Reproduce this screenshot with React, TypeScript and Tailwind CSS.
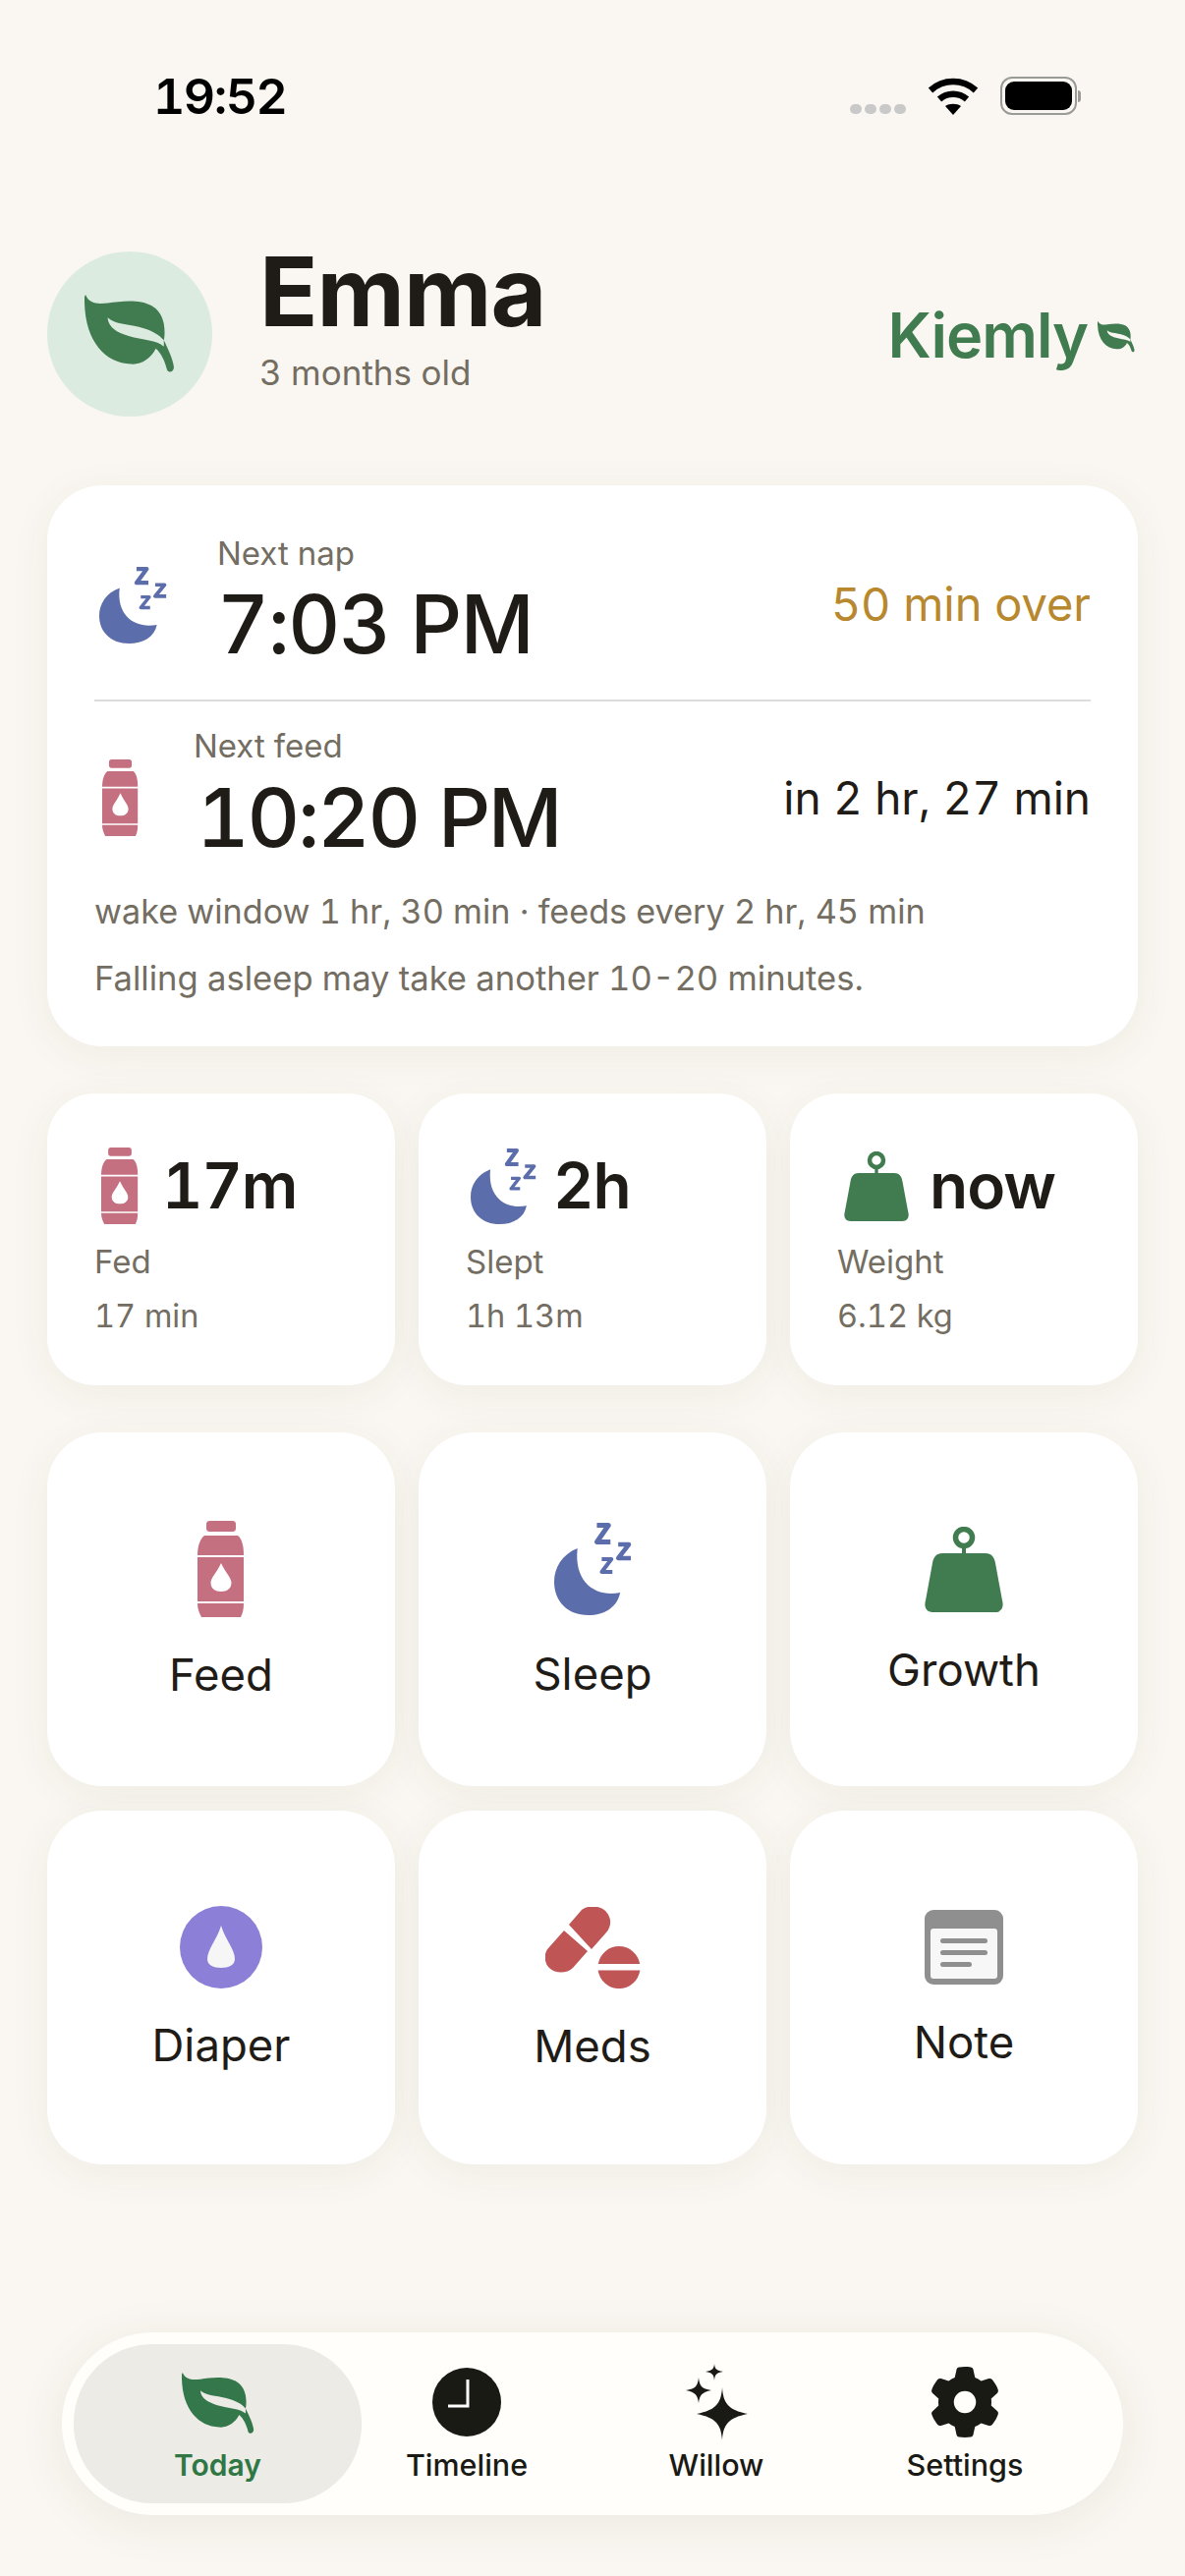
import { FaGear } from 'react-icons/fa6'

type IconProps = { w: number; h: number; className?: string }

function Leaf({ w, h, fill, vein, className }: IconProps & { fill: string; vein: string }) {
  return (
    <svg width={w} height={h} viewBox="0 0 90 76" preserveAspectRatio="none" className={className}>
      <path fill={fill} d="M1 0 C5 9 13 9 23 8 C44 5 74 2 79 28 C80 34 80 40 79 44 C83 52 88 62 89 70 C89 75 83 76 82 72 C80 64 76 56 71 52 C66 62 56 68 46 67 C20 66 -1 44 0 2 Z" />
      <path fill={vein} d="M23 22 C32 29 42 28 54 31 C66 34 74 38 79 44 L79 50 C72 44 58 44 44 40 C32 36 24 32 23 22 Z" />
    </svg>
  )
}

function Bottle({ w, h, className }: IconProps) {
  return (
    <svg width={w} height={h} viewBox="0 0 48 98" preserveAspectRatio="none" className={className}>
      <g fill="#c47080">
        <rect x="9" y="0" width="30" height="11" rx="3.5" />
        <path d="M7 15 H41 C45 18 47 25 47 35 H0 C0 25 3 18 7 15 Z" />
        <path fillRule="evenodd" d="M0 37 H47 V82 H0 Z M24 43 C20 52 13.5 58 13.5 63 C13.5 69 18 72 24 72 C30 72 34.5 69 34.5 63 C34.5 58 28 52 24 43 Z" />
        <path d="M0 84 H47 C47 90 46 94 44 98 H4 C2 94 0 90 0 84 Z" />
      </g>
    </svg>
  )
}

function MoonZ({ w, h, className }: IconProps) {
  return (
    <svg width={w} height={h} viewBox="0 0 80 94" preserveAspectRatio="none" className={className}>
      <path fill="#5c6dab" d="M24 26 C8 32 0 46 0 60 C0 80 14 94 35 94 C52 94 65 86 68 71 C44 76 20 62 24 26 Z" />
      <g fill="none" stroke="#5c6dab" strokeLinejoin="round">
        <path strokeWidth="5" d="M44 2.5 H56 L44 19.5 H58" />
        <path strokeWidth="4.5" d="M66 22 H77 L66 36 H79" />
        <path strokeWidth="4" d="M49 37 H59 L49 50 H60" />
      </g>
    </svg>
  )
}

function Weight({ w, h, className }: IconProps) {
  return (
    <svg width={w} height={h} viewBox="0 0 80 87" preserveAspectRatio="none" className={className}>
      <path fill="#407c50" d="M18 27 H62 C68 27 71 31 72 37 L79 75 C81 82 78 87 72 87 H8 C2 87 -1 82 1 75 L8 37 C9 31 12 27 18 27 Z" />
      <circle cx="40" cy="11" r="8.5" fill="none" stroke="#407c50" strokeWidth="5.5" />
      <rect x="38" y="18" width="4" height="10" fill="#407c50" />
    </svg>
  )
}

function DiaperIcon({ className }: { className?: string }) {
  return (
    <svg width={84} height={84} viewBox="0 0 84 84" className={className}>
      <circle cx="42" cy="42" r="42" fill="#8b7fd8" />
      <path fill="#f6f6f6" d="M42 20 C38 34 28 44 28 54 C28 60 34 63 42 63 C50 63 56 60 56 54 C56 44 46 34 42 20 Z" />
    </svg>
  )
}

function MedsIcon({ className }: { className?: string }) {
  return (
    <svg width={97} height={83} viewBox="0 0 97 83" className={className}>
      <g fill="#bf5555">
        <path d="M24 18 L37 3 C43 -2 56 -2 62 5 C68 12 67 20 62 26 L47 43 Z" />
        <path d="M19 24 L43 45 L28 62 C22 68 10 68 4 62 C-2 56 -1 46 3 42 Z" />
        <path d="M53.8 58 A21.5 21.5 0 0 1 96.2 58 Z" />
        <path d="M53.7 64.5 A21.5 21.5 0 0 0 96.3 64.5 Z" />
      </g>
    </svg>
  )
}

function NoteIcon({ className }: { className?: string }) {
  return (
    <svg width={80} height={76} viewBox="0 0 80 76" className={className}>
      <rect width="80" height="76" rx="9" fill="#8f8f8f" />
      <rect x="6" y="19" width="68" height="51" rx="3" fill="#f7f7f7" />
      <rect x="16" y="29" width="48" height="5" rx="2.5" fill="#8f8f8f" />
      <rect x="16" y="41" width="48" height="5" rx="2.5" fill="#8f8f8f" />
      <rect x="16" y="53" width="32" height="5" rx="2.5" fill="#8f8f8f" />
    </svg>
  )
}

function ClockIcon() {
  return (
    <svg width={70} height={70} viewBox="0 0 70 70">
      <circle cx="35" cy="35" r="35" fill="#1a1a15" />
      <path d="M36 12 V39 H16" fill="none" stroke="#fff" strokeWidth="3" />
    </svg>
  )
}

function SparkIcon() {
  return (
    <svg width={64} height={78} viewBox="0 0 64 78" fill="#1a1a15">
      <path d="M38 24 C39 40 44 47 64 51 C44 55 39 62 38 78 C37 62 32 55 12 51 C32 47 37 40 38 24 Z" />
      <path d="M14 14 C15 23 17 25 27 27 C17 29 15 32 14 40 C13 32 11 29 1 27 C11 25 13 23 14 14 Z" />
      <path d="M30 0 C30.5 5 32 7 39 8 C32 9 30.5 11 30 17 C29.5 11 28 9 21 8 C28 7 29.5 5 30 0 Z" />
    </svg>
  )
}

function StatusBar() {
  return (
    <div className="flex items-start justify-between pl-[156px] pr-[106px] pt-[70px] h-[136px]">
      <span className="text-[50px] leading-[56px] font-semibold text-black tracking-[-1.5px]">19:52</span>
      <div className="flex items-end gap-[22px] pt-[8px]">
        <div className="flex gap-[3px] mb-[1px]">
          <i className="w-[12px] h-[10px] rounded-full bg-[#c9c9c9]" />
          <i className="w-[12px] h-[10px] rounded-full bg-[#c9c9c9]" />
          <i className="w-[12px] h-[10px] rounded-full bg-[#c9c9c9]" />
          <i className="w-[12px] h-[10px] rounded-full bg-[#c9c9c9]" />
        </div>
        <svg width={52} height={38} viewBox="0 0 52 38" fill="none" stroke="#000" strokeWidth="6.5">
          <path d="M3 13 C16 1 36 1 49 13" />
          <path d="M12 22 C20 15 32 15 40 22" />
          <path fill="#000" stroke="none" d="M18 29 C22 26 30 26 34 29 L26 38 Z" />
        </svg>
        <div className="flex items-center">
          <div className="w-[78px] h-[39px] rounded-[12px] border-2 border-[#9a9a96] p-[3px]">
            <div className="w-full h-full rounded-[9px] bg-black" />
          </div>
          <div className="w-[3px] h-[12px] rounded-r-full bg-[#9a9a96] ml-[1px]" />
        </div>
      </div>
    </div>
  )
}

function Header() {
  return (
    <div className="flex items-center mt-[120px] pl-[48px] pr-[51px]">
      <div className="w-[168px] h-[168px] rounded-full bg-[#dcebe0] flex items-center justify-center">
        <Leaf w={92} h={80} fill="#407c50" vein="#dcebe0" />
      </div>
      <div className="ml-[48px] -mt-[36px]">
        <h1 className="text-[98px] leading-[104px] font-bold text-[#1f1c17] tracking-[-1px]">Emma</h1>
        <p className="text-[35px] leading-[40px] text-[#736d62] mt-[10px]">3 months old</p>
      </div>
      <div className="ml-auto flex items-center gap-[10px] mt-[2px]">
        <span className="text-[63px] leading-[70px] font-semibold text-[#407c50] tracking-[-1px]">Kiemly</span>
        <Leaf w={38} h={32} fill="#407c50" vein="#faf7f2" className="mt-[4px]" />
      </div>
    </div>
  )
}

function NextRow({ icon, label, time, timeClass, right, rightClass, labelMl }: { icon: React.ReactNode; label: string; time: string; timeClass: string; right: string; rightClass: string; labelMl: string }) {
  return (
    <div className="flex items-center">
      {icon}
      <div className={labelMl}>
        <p className="text-[33px] leading-[40px] text-[#736d62]">{label}</p>
        <p className={`leading-[96px] font-medium text-[#1f1c17] mt-[5px] ${timeClass}`}>{time}</p>
      </div>
      <span className={rightClass}>{right}</span>
    </div>
  )
}

function NextCard() {
  return (
    <section className="mx-[48px] mt-[70px] h-[571px] rounded-[56px] bg-white shadow-[0_8px_44px_rgba(70,60,30,0.06)] px-[48px] pt-[49px]">
      <NextRow
        icon={<MoonZ w={69} h={78} className="ml-[5px] mt-[5px]" />}
        label="Next nap"
        time="7:03 PM"
        timeClass="text-[82px] tracking-[-1.4px]"
        right="50 min over"
        rightClass="ml-auto text-[47px] leading-[56px] text-[#b8882f] mt-[3px]"
        labelMl="ml-[51px]"
      />
      <div className="h-[2px] bg-[#dcdcdc] mt-[28px]" />
      <div className="mt-[25px]">
        <NextRow
          icon={<Bottle w={37} h={78} className="ml-[8px] mt-[4px]" />}
          label="Next feed"
          time="10:20 PM"
          timeClass="text-[83px] tracking-[-2.3px] ml-[3px]"
          right="in 2 hr, 27 min"
          rightClass="ml-auto text-[46px] leading-[56px] text-[#1f1c17] mt-[5px]"
          labelMl="ml-[56px]"
        />
      </div>
      <p className="text-[34.2px] leading-[40px] text-[#736d62] mt-[28px]">wake window 1 hr, 30 min · feeds every 2 hr, 45 min</p>
      <p className="text-[34.6px] leading-[40px] text-[#736d62] mt-[27px]">Falling asleep may take another 10-20 minutes.</p>
    </section>
  )
}

function StatCard({ icon, value, label, sub, gap }: { icon: React.ReactNode; value: string; label: string; sub: string; gap: string }) {
  return (
    <div className="h-[297px] rounded-[48px] bg-white shadow-[0_8px_44px_rgba(70,60,30,0.06)] pl-[48px] pt-[55px]">
      <div className={`flex items-center h-[78px] ${gap}`}>
        {icon}
        <span className="text-[64px] leading-[72px] font-semibold text-[#1f1c17] tracking-[-1px]">{value}</span>
      </div>
      <p className="text-[33px] leading-[40px] text-[#736d62] mt-[18px]">{label}</p>
      <p className="text-[32.5px] leading-[40px] text-[#736d62] mt-[16px]">{sub}</p>
    </div>
  )
}

function ActionCard({ icon, label, gap }: { icon: React.ReactNode; label: string; gap: string }) {
  return (
    <div className="h-[360px] rounded-[56px] bg-white shadow-[0_8px_44px_rgba(70,60,30,0.06)] flex flex-col items-center pt-[90px]">
      <div className="h-[98px] flex items-center">{icon}</div>
      <span className={`text-[45.5px] leading-[56px] text-[#1f1c17] ${gap}`}>{label}</span>
    </div>
  )
}

function NavItem({ icon, label, active, className }: { icon: React.ReactNode; label: string; active?: boolean; className?: string }) {
  if (active) {
    return (
      <div className="w-[293px] h-[162px] rounded-[80px] bg-[#ecebe6] flex flex-col items-center pt-[29px]">
        <div className="h-[63px]">{icon}</div>
        <span className="text-[30px] leading-[36px] font-semibold text-[#2f7744] mt-[13px]">{label}</span>
      </div>
    )
  }
  return (
    <div className={`flex flex-col items-center pt-[22px] w-[214px] ${className ?? ''}`}>
      <div className="h-[74px] flex items-center">{icon}</div>
      <span className="text-[30.5px] leading-[36px] font-medium text-[#1a1a15] mt-[9px]">{label}</span>
    </div>
  )
}

export default function App() {
  return (
    <main className="w-[1206px] h-[2622px] bg-[#faf7f2] overflow-hidden font-['Inter',sans-serif] tabular-nums">
      <StatusBar />
      <Header />
      <NextCard />

      <div className="grid grid-cols-3 gap-[24px] mx-[48px] mt-[48px]">
        <StatCard icon={<Bottle w={38} h={78} className="ml-[7px]" />} value="17m" label="Fed" sub="17 min" gap="gap-[24px]" />
        <StatCard icon={<MoonZ w={67} h={77} className="ml-[5px]" />} value="2h" label="Slept" sub="1h 13m" gap="gap-[17px]" />
        <StatCard icon={<Weight w={66} h={71} className="ml-[7px]" />} value="now" label="Weight" sub="6.12 kg" gap="gap-[21px]" />
      </div>

      <div className="grid grid-cols-3 gap-x-[24px] gap-y-[25px] mx-[48px] mt-[48px]">
        <ActionCard icon={<Bottle w={48} h={98} />} label="Feed" gap="mt-[31px]" />
        <ActionCard icon={<MoonZ w={79} h={94} />} label="Sleep" gap="mt-[30px]" />
        <ActionCard icon={<Weight w={80} h={87} />} label="Growth" gap="mt-[26px]" />
        <ActionCard icon={<DiaperIcon />} label="Diaper" gap="mt-[23px]" />
        <ActionCard icon={<MedsIcon />} label="Meds" gap="mt-[24px]" />
        <ActionCard icon={<NoteIcon />} label="Note" gap="mt-[20px]" />
      </div>

      <nav className="mx-[63px] mt-[171px] h-[186px] rounded-[93px] bg-[#fffefa] shadow-[0_8px_50px_rgba(70,60,30,0.08)] flex items-start p-[12px]">
        <NavItem active label="Today" icon={<Leaf w={74} h={63} fill="#33774a" vein="#ecebe6" />} />
        <NavItem label="Timeline" icon={<ClockIcon />} />
        <NavItem label="Willow" icon={<SparkIcon />} className="ml-[40px]" />
        <NavItem label="Settings" icon={<FaGear size={72} color="#1a1a15" />} className="ml-[39px]" />
      </nav>
    </main>
  )
}
